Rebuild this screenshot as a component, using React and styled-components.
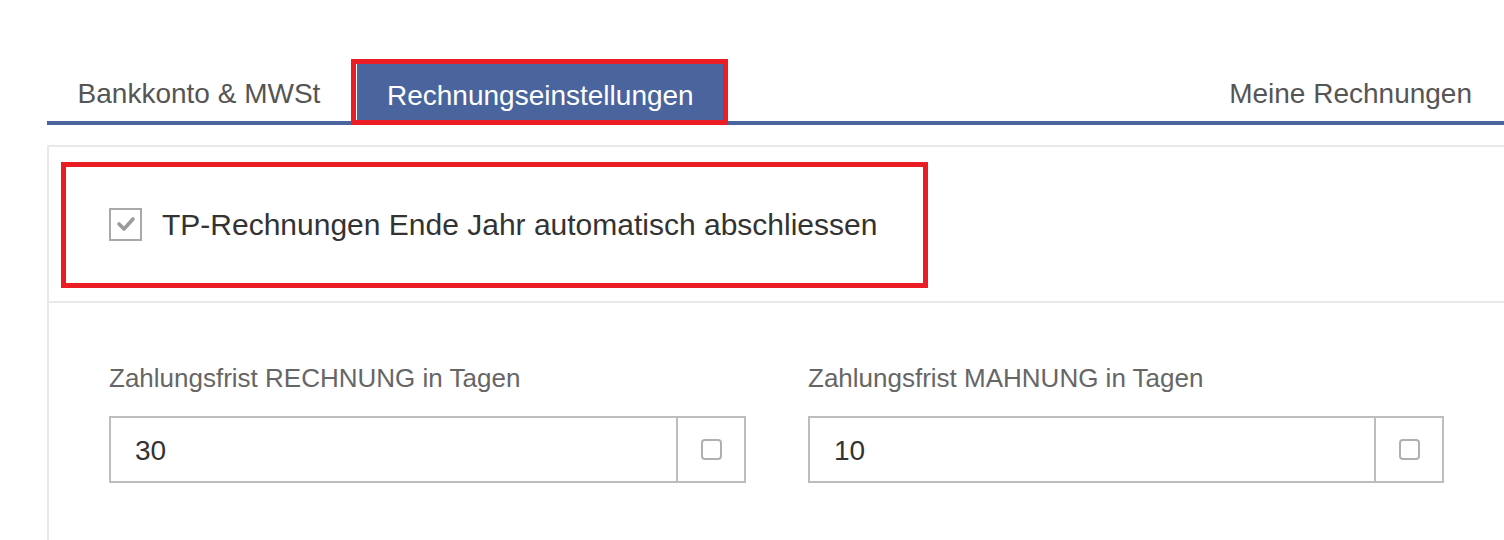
import React from "react";
import styled, { createGlobalStyle } from "styled-components";

const GlobalStyle = createGlobalStyle`
  body {
    margin: 0;
    background: #fff;
    font-family: "Liberation Sans", Arial, sans-serif;
  }
`;

const App = () => {
  return (
    <>
      <GlobalStyle />
      <Page>
        <TabBar>
          <Tab>Bankkonto &amp; MWSt</Tab>
          <Marked>
            <ActiveTab>Rechnungseinstellungen</ActiveTab>
          </Marked>
          <Spacer />
          <Tab $right>Meine Rechnungen</Tab>
        </TabBar>
        <Panel>
          <CheckSection>
            <MarkedRow>
              <CheckBox>
                <svg width="20" height="16" viewBox="0 0 20 16">
                  <polyline
                    points="3,8 8,13 17,3"
                    fill="none"
                    stroke="#9b9b9b"
                    strokeWidth="3.6"
                    strokeLinecap="round"
                    strokeLinejoin="round"
                  />
                </svg>
              </CheckBox>
              <CheckLabel>TP-Rechnungen Ende Jahr automatisch abschliessen</CheckLabel>
            </MarkedRow>
          </CheckSection>
          <FieldSection>
            <Field>
              <FieldLabel>Zahlungsfrist RECHNUNG in Tagen</FieldLabel>
              <InputGroup>
                <InputValue>30</InputValue>
                <Addon>
                  <SmallBox />
                </Addon>
              </InputGroup>
            </Field>
            <Field>
              <FieldLabel>Zahlungsfrist MAHNUNG in Tagen</FieldLabel>
              <InputGroup>
                <InputValue>10</InputValue>
                <Addon>
                  <SmallBox />
                </Addon>
              </InputGroup>
            </Field>
          </FieldSection>
        </Panel>
      </Page>
    </>
  );
};

const Page = styled.div`
  padding-top: 59px;
  padding-left: 47px;
  overflow: hidden;
`;

const TabBar = styled.div`
  display: flex;
  align-items: flex-start;
  height: 62px;
  border-bottom: 4px solid #4a659d;
  margin-bottom: 20px;
`;

const Tab = styled.div`
  height: 62px;
  display: flex;
  align-items: center;
  justify-content: center;
  box-sizing: border-box;
  width: ${(p) => (p.$right ? "auto" : "304px")};
  padding: ${(p) => (p.$right ? "7px 32px 0 30px" : "7px 0 0 0")};
  font-size: 28px;
  color: #555;
  white-space: nowrap;
`;

const Marked = styled.div`
  position: relative;
  z-index: 1;
  height: 66px;
  box-sizing: border-box;
  border: 5px solid #ea1c24;
  margin-bottom: -4px;
`;

const ActiveTab = styled.div`
  height: 56px;
  box-sizing: border-box;
  display: flex;
  align-items: center;
  padding: 7px 29px 0 30px;
  border-left: 1px solid #fff;
  background: #4a659d;
  color: #fff;
  font-size: 28px;
  white-space: nowrap;
`;

const Spacer = styled.div`
  flex: 1;
`;

const Panel = styled.div`
  border-left: 2px solid #e9e9e9;
  border-top: 2px solid #e9e9e9;
`;

const CheckSection = styled.div`
  padding: 15px 0 13px 12px;
  border-bottom: 2px solid #e9e9e9;
`;

const MarkedRow = styled.div`
  width: 867px;
  height: 126px;
  box-sizing: border-box;
  border: 5px solid #ea1c24;
  padding-left: 43px;
  display: flex;
  align-items: center;
`;

const CheckBox = styled.div`
  width: 33px;
  height: 33px;
  box-sizing: border-box;
  border: 2px solid #a9a9a9;
  display: flex;
  align-items: center;
  justify-content: center;
  flex-shrink: 0;
  margin-top: -2px;
`;

const CheckLabel = styled.div`
  margin-left: 20px;
  font-size: 30px;
  color: #333;
  white-space: nowrap;
`;

const FieldSection = styled.div`
  display: grid;
  grid-template-columns: 637px 636px;
  column-gap: 62px;
  padding: 60px 0 60px 60px;
`;

const Field = styled.div`
  display: flex;
  flex-direction: column;
`;

const FieldLabel = styled.div`
  font-size: 26px;
  line-height: 31px;
  color: #666;
  margin-bottom: 22px;
  white-space: nowrap;
`;

const InputGroup = styled.div`
  display: flex;
  height: 67px;
  box-sizing: border-box;
  border: 2px solid #bdbdbd;
`;

const InputValue = styled.div`
  flex: 1;
  display: flex;
  align-items: center;
  padding: 3px 0 0 24px;
  font-size: 28px;
  color: #333;
`;

const Addon = styled.div`
  width: 66px;
  border-left: 2px solid #bdbdbd;
  display: flex;
  align-items: center;
  justify-content: center;
`;

const SmallBox = styled.div`
  width: 21px;
  height: 21px;
  box-sizing: border-box;
  border: 2px solid #b0b0b0;
  border-radius: 4px;
`;

export default App;
